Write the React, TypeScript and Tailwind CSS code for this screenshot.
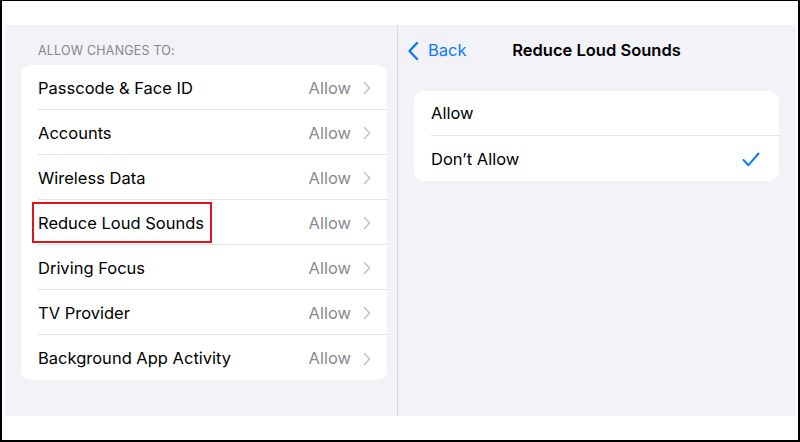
import React from "react";

const rows = [
  "Passcode & Face ID",
  "Accounts",
  "Wireless Data",
  "Reduce Loud Sounds",
  "Driving Focus",
  "TV Provider",
  "Background App Activity",
];

function Chevron() {
  return (
    <svg width="8" height="14" viewBox="0 0 8 14" className="ml-[12px]">
      <path d="M1.5 1.5 L6.5 7 L1.5 12.5" fill="none" stroke="#c4c4c8" strokeWidth="1.6" strokeLinecap="round" strokeLinejoin="round" />
    </svg>
  );
}

export default function App() {
  return (
    <div
      className="w-[800px] h-[442px] bg-white border-t border-x-2 border-b-2 border-black pl-[3px] pr-[2px] pt-[24px] pb-[24px]"
      style={{ fontFamily: "Inter, 'Noto Sans', sans-serif" }}
    >
      <div className="flex h-full bg-[#f2f2f7]">
        {/* Left column */}
        <div className="w-[392px] shrink-0 pl-[16px] pr-[10px] pt-[18px]">
          <div className="pl-[17px] text-[12.5px] leading-[16px] text-[#86868b] tracking-[0.2px] mb-[6px]">
            ALLOW CHANGES TO:
          </div>
          <div className="bg-white rounded-[10px] overflow-hidden">
            {rows.map((r, i) => (
              <div key={r} className="h-[45px] pl-[17px] flex items-center">
                <div
                  className={
                    "flex-1 h-full flex items-center pr-[16px] pt-[2px] " +
                    (i < rows.length - 1 ? "border-b border-[#e2e2e6]" : "")
                  }
                >
                  <div className="flex-1 flex items-center">
                    {r === "Reduce Loud Sounds" ? (
                      <span className="relative text-[16.5px] text-black">
                        {r}
                        <span className="absolute left-[-6px] right-[-8px] top-[-9px] bottom-[-8px] border-[2.5px] border-[#e3121b]" />
                      </span>
                    ) : (
                      <span className="text-[16.5px] text-black">{r}</span>
                    )}
                  </div>
                  <span className="text-[16.5px] text-[#8a8a8e]">Allow</span>
                  <Chevron />
                </div>
              </div>
            ))}
          </div>
        </div>
        {/* Divider */}
        <div className="w-px bg-[#dcdce0] shrink-0" />
        {/* Right column */}
        <div className="flex-1 pl-[16px] pr-[17px]">
          <div className="h-[50px] relative flex items-center">
            <div className="flex items-center text-[#0a7aff] ml-[-7px] pt-[1px]">
              <svg width="12" height="20" viewBox="0 0 12 20">
                <path d="M10 2 L2.5 10 L10 18" fill="none" stroke="#0a7aff" strokeWidth="2.4" strokeLinecap="round" strokeLinejoin="round" />
              </svg>
              <span className="ml-[9px] text-[16.5px]">Back</span>
            </div>
            <div className="absolute left-0 right-0 top-0 bottom-0 flex items-center justify-center pointer-events-none">
              <span className="text-[16.5px] font-semibold text-black">Reduce Loud Sounds</span>
            </div>
          </div>
          <div className="mt-[16px] bg-white rounded-[10px] overflow-hidden">
            <div className="h-[45px] pl-[17px] flex">
              <div className="flex-1 flex items-center pt-[1px] border-b border-[#e2e2e6] text-[16.5px] text-black">Allow</div>
            </div>
            <div className="h-[45px] pl-[17px] pr-[19px] pt-[1px] flex items-center">
              <div className="flex-1 text-[16.5px] text-black">Don’t Allow</div>
              <svg width="18" height="15" viewBox="0 0 18 15">
                <path d="M1.5 8 L6.5 13.2 L16.5 1.5" fill="none" stroke="#0a7aff" strokeWidth="2" strokeLinecap="round" strokeLinejoin="round" />
              </svg>
            </div>
          </div>
        </div>
      </div>
    </div>
  );
}
